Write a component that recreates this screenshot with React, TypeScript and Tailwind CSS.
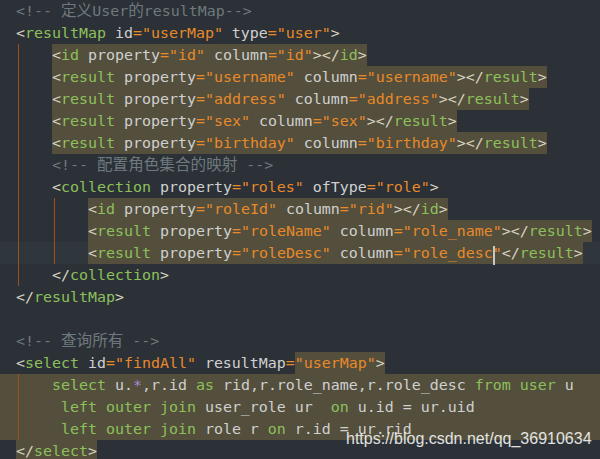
import type { ReactNode } from "react";

const colors = {
  p: "text-[#d8d4c2]", // tag brackets
  t: "text-[#8dc05b]", // tag names / sql keywords
  a: "text-[#d0d0d0]", // attribute names / plain text
  o: "text-[#e8892a]", // = and strings
  c: "text-[#6e797f]", // comments
  m: "text-[#a68bd6]", // *
};

type Kind = keyof typeof colors;

function T({ k, children }: { k: Kind; children: ReactNode }) {
  return <span className={colors[k]}>{children}</span>;
}

// CJK glyphs in the editor come out a touch wider than the mono cells
function Cjk({ children }: { children: ReactNode }) {
  return <span className="text-[15.6px]">{children}</span>;
}

function Open({ name, attrs }: { name: string; attrs: [string, string][] }) {
  return (
    <>
      <T k="p">{"<"}</T>
      <T k="t">{name}</T>
      {attrs.map(([k, v]) => (
        <span key={k}>
          <T k="a">{" " + k}</T>
          <T k="o">{'="' + v + '"'}</T>
        </span>
      ))}
      <T k="p">{">"}</T>
    </>
  );
}

function Close({ name }: { name: string }) {
  return (
    <>
      <T k="p">{"</"}</T>
      <T k="t">{name}</T>
      <T k="p">{">"}</T>
    </>
  );
}

function Line({ children, bg = "" }: { children?: ReactNode; bg?: string }) {
  return <div className={`flex h-[22px] pl-4 leading-[22px] whitespace-pre ${bg}`}>{children}</div>;
}

function Ind({ guide = true }: { guide?: boolean }) {
  return (
    <span className="inline-block h-[22px] w-[36px] shrink-0">
      {guide && <span className="ml-[2px] block h-full w-px bg-[#9b5118]" />}
    </span>
  );
}

function Hl({ children }: { children: ReactNode }) {
  return <span className="inline-block h-[22px] bg-[#534f3c] leading-[22px]">{children}</span>;
}

function Field({ tag, prop, col }: { tag: string; prop: string; col: string }) {
  return (
    <Hl>
      <Open name={tag} attrs={[["property", prop], ["column", col]]} />
      <Close name={tag} />
    </Hl>
  );
}

export default function App() {
  return (
    <div className="relative h-[459px] w-[600px] overflow-hidden bg-[#2b3136] font-['DejaVu_Sans_Mono','Noto_Sans_CJK_SC',monospace] text-[14.95px]">
      <Line>
        <T k="c">
          {"<!-- "}
          <Cjk>定义</Cjk>
          {"User"}
          <Cjk>的</Cjk>
          {"resultMap-->"}
        </T>
      </Line>
      <Line>
        <Open name="resultMap" attrs={[["id", "userMap"], ["type", "user"]]} />
      </Line>
      <Line>
        <Ind />
        <Field tag="id" prop="id" col="id" />
      </Line>
      <Line>
        <Ind />
        <Field tag="result" prop="username" col="username" />
      </Line>
      <Line>
        <Ind />
        <Field tag="result" prop="address" col="address" />
      </Line>
      <Line>
        <Ind />
        <Field tag="result" prop="sex" col="sex" />
      </Line>
      <Line>
        <Ind />
        <Field tag="result" prop="birthday" col="birthday" />
      </Line>
      <Line>
        <Ind />
        <T k="c">
          {"<!-- "}
          <Cjk>配置角色集合的映射</Cjk>
          {" -->"}
        </T>
      </Line>
      <Line>
        <Ind />
        <Open name="collection" attrs={[["property", "roles"], ["ofType", "role"]]} />
      </Line>
      <Line>
        <Ind />
        <Ind />
        <Field tag="id" prop="roleId" col="rid" />
      </Line>
      <Line>
        <Ind />
        <Ind />
        <Field tag="result" prop="roleName" col="role_name" />
      </Line>
      <Line bg="bg-[#30373c]">
        <Ind />
        <Ind />
        <Hl>
          <T k="p">{"<"}</T>
          <T k="t">result</T>
          <T k="a"> property</T>
          <T k="o">{'="roleDesc"'}</T>
          <T k="a"> column</T>
          <T k="o">{'="role_desc'}</T>
          <span className="relative">
            <span className="absolute left-0 top-[2px] h-[19px] w-[2px] bg-[#c8c8c8]" />
          </span>
          <T k="o">{'"'}</T>
          <Close name="result" />
        </Hl>
      </Line>
      <Line>
        <Ind />
        <Close name="collection" />
      </Line>
      <Line>
        <Close name="resultMap" />
      </Line>
      <Line />
      <Line>
        <T k="c">
          {"<!-- "}
          <Cjk>查询所有</Cjk>
          {" -->"}
        </T>
      </Line>
      <Line>
        <T k="p">{"<"}</T>
        <T k="t">select</T>
        <T k="a"> id</T>
        <T k="o">{'="findAll"'}</T>
        <T k="a"> resultMap</T>
        <T k="o">=</T>
        <Hl>
          <T k="o">{'"userMap"'}</T>
          <T k="p">{">"}</T>
        </Hl>
      </Line>
      <Line bg="bg-[#534f3c]">
        <Ind />
        <T k="t">select</T>
        <T k="a"> u.</T>
        <T k="m">*</T>
        <T k="a">,r.id </T>
        <T k="t">as</T>
        <T k="a"> rid,r.role_name,r.role_desc </T>
        <T k="t">from user</T>
        <T k="a"> u</T>
      </Line>
      <Line bg="bg-[#534f3c]">
        <Ind />
        <T k="a"> </T>
        <T k="t">left outer join</T>
        <T k="a"> user_role ur  </T>
        <T k="t">on</T>
        <T k="a"> u.id = ur.uid</T>
      </Line>
      <Line bg="bg-[#534f3c]">
        <Ind />
        <T k="a"> </T>
        <T k="t">left outer join</T>
        <T k="a"> role r </T>
        <T k="t">on</T>
        <T k="a"> r.id = ur.rid</T>
      </Line>
      <Line>
        <Hl>
          <Close name="select" />
        </Hl>
      </Line>

      <div className="absolute left-[346px] top-[431px] font-['Liberation_Sans',Arial,sans-serif] text-[16px] leading-none text-white/85">
        https://blog.csdn.net/qq_36910634
      </div>
    </div>
  );
}
